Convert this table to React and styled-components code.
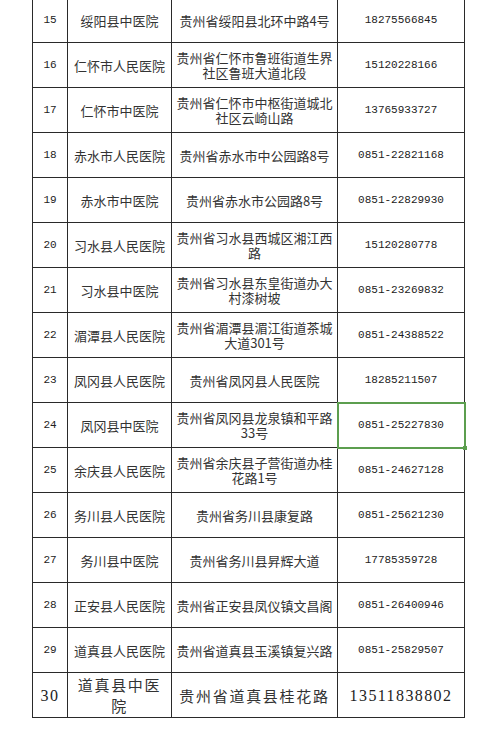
import React from 'react'
import styled, { createGlobalStyle } from 'styled-components'

const GlobalStyle = createGlobalStyle`
  html, body {
    margin: 0;
    padding: 0;
    background: #fff;
    overflow: hidden;
  }
`

const Page = styled.div`
  width: 500px;
  height: 732px;
  padding-left: 32px;
  box-sizing: border-box;
  overflow: hidden;
`

const Table = styled.table`
  margin-top: -3px;
  border-collapse: collapse;
  table-layout: fixed;
  width: 432px;
  font-family: 'Noto Sans CJK SC', 'Noto Sans', sans-serif;
  color: #333;
`

const Col = styled.col`
  width: ${(p) => p.$w}px;
`

const Row = styled.tr`
  height: 45px;
`

const Cell = styled.td`
  position: relative;
  border: 1px solid #2a2a2a;
  padding: 0 4px;
  text-align: center;
  vertical-align: middle;
  font-size: ${(p) => (p.$big ? '15px' : '13px')};
  letter-spacing: ${(p) => (p.$big ? '1.7px' : '0')};
  line-height: ${(p) => (p.$big ? '21px' : '15px')};
  ${(p) =>
    p.$selected &&
    `
    outline: 2px solid #5c9e4f;
    outline-offset: -1px;
    &::after {
      content: '';
      position: absolute;
      right: -3px;
      bottom: -3px;
      width: 4px;
      height: 4px;
      background: #5c9e4f;
    }
  `}
`

const NumCell = styled(Cell)`
  font-family: ${(p) =>
    p.$big
      ? "'Liberation Serif', 'DejaVu Serif', serif"
      : "'Liberation Mono', 'DejaVu Sans Mono', monospace"};
  font-size: ${(p) => (p.$big ? '16px' : '11px')};
  letter-spacing: ${(p) => (p.$big ? '1.4px' : '0')};
  color: #222;
`

const rows = [
  ['15', '绥阳县中医院', '贵州省绥阳县北环中路4号', '18275566845'],
  ['16', '仁怀市人民医院', '贵州省仁怀市鲁班街道生界社区鲁班大道北段', '15120228166'],
  ['17', '仁怀市中医院', '贵州省仁怀市中枢街道城北社区云崎山路', '13765933727'],
  ['18', '赤水市人民医院', '贵州省赤水市中公园路8号', '0851-22821168'],
  ['19', '赤水市中医院', '贵州省赤水市公园路8号', '0851-22829930'],
  ['20', '习水县人民医院', '贵州省习水县西城区湘江西路', '15120280778'],
  ['21', '习水县中医院', '贵州省习水县东皇街道办大村漆树坡', '0851-23269832'],
  ['22', '湄潭县人民医院', '贵州省湄潭县湄江街道茶城大道301号', '0851-24388522'],
  ['23', '凤冈县人民医院', '贵州省凤冈县人民医院', '18285211507'],
  ['24', '凤冈县中医院', '贵州省凤冈县龙泉镇和平路33号', '0851-25227830'],
  ['25', '余庆县人民医院', '贵州省余庆县子营街道办桂花路1号', '0851-24627128'],
  ['26', '务川县人民医院', '贵州省务川县康复路', '0851-25621230'],
  ['27', '务川县中医院', '贵州省务川县昇辉大道', '17785359728'],
  ['28', '正安县人民医院', '贵州省正安县凤仪镇文昌阁', '0851-26400946'],
  ['29', '道真县人民医院', '贵州省道真县玉溪镇复兴路', '0851-25829507'],
  ['30', '道真县中医院', '贵州省道真县桂花路', '13511838802'],
]

export default function App() {
  return (
    <Page>
      <GlobalStyle />
      <Table>
        <colgroup>
          <Col $w={35} />
          <Col $w={104} />
          <Col $w={166} />
          <Col $w={127} />
        </colgroup>
        <tbody>
          {rows.map(([no, name, addr, phone]) => {
            const big = no === '30'
            return (
              <Row key={no}>
                <NumCell $big={big}>{no}</NumCell>
                <Cell $big={big}>{name}</Cell>
                <Cell $big={big}>{addr}</Cell>
                <NumCell $big={big} $selected={no === '24'}>
                  {phone}
                </NumCell>
              </Row>
            )
          })}
        </tbody>
      </Table>
    </Page>
  )
}
